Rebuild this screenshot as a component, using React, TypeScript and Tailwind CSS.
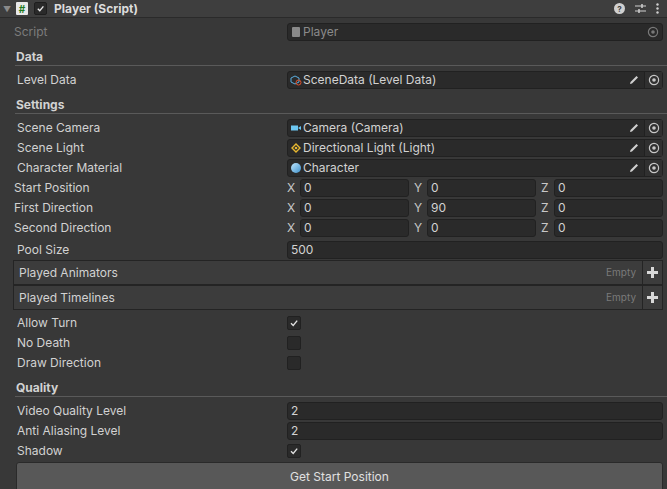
import React from "react";

const Pencil = () => (
  <svg width="12" height="12" viewBox="0 0 12 12"><path d="M2 10 L2.5 8 L8.5 2 L10 3.5 L4 9.5 Z" fill="#d0d0d0"/></svg>
);
const Target = () => (
  <svg width="12" height="12" viewBox="0 0 12 12"><circle cx="6" cy="6" r="4.6" fill="none" stroke="#c8c8c8" strokeWidth="1.2"/><circle cx="6" cy="6" r="1.8" fill="#c8c8c8"/></svg>
);

const Label = ({ children, pl = "pl-[17px]" }: { children: React.ReactNode; pl?: string }) => (
  <div className={`w-[287px] shrink-0 ${pl} text-[12px] text-[#d2d2d2] truncate`}>{children}</div>
);

const ObjField = ({ icon, text, disabled }: { icon: React.ReactNode; text: string; disabled?: boolean }) => (
  <div className="flex-1 h-[18px] mr-[4px] flex items-center rounded-[3px] border border-[#212121] bg-[#2a2a2a]">
    <div className="w-[14px] flex justify-center ml-[1px]">{icon}</div>
    <span className={`flex-1 text-[12px] ${disabled ? "text-[#8a8a8a]" : "text-[#d2d2d2]"}`}>{text}</span>
    {!disabled && <div className="w-[20px] flex justify-center"><Pencil /></div>}
    <div className={`w-[18px] h-full flex items-center justify-center ${disabled ? "opacity-50" : "bg-[#303030] border-l border-[#212121]"}`}><Target /></div>
  </div>
);

const TextField = ({ v }: { v: string }) => (
  <div className="flex-1 h-[18px] mr-[4px] flex items-center rounded-[3px] border border-[#212121] bg-[#2a2a2a] px-[3px] text-[12px] text-[#d2d2d2]">{v}</div>
);

const Row = ({ children }: { children: React.ReactNode }) => (
  <div className="h-[20px] flex items-center">{children}</div>
);

const Header = ({ t }: { t: string }) => (
  <div className="h-[28px] flex flex-col justify-end mx-[0px]">
    <div className="pl-[16px] text-[12px] font-bold text-[#d2d2d2] leading-[16px]">{t}</div>
    <div className="ml-[15px] h-px bg-[#5a5a5a] mb-[4px]" />
  </div>
);

const Vec = ({ label, x, y, z }: { label: string; x: string; y: string; z: string }) => (
  <Row>
    <Label pl="pl-[14px]">{label}</Label>
    <div className="flex-1 flex mr-[4px] gap-[5px]">
      {[["X", x], ["Y", y], ["Z", z]].map(([k, v]) => (
        <div key={k} className="flex-1 flex items-center">
          <span className="w-[13px] text-[12px] text-[#c8c8c8]">{k}</span>
          <div className="flex-1 h-[18px] flex items-center rounded-[3px] border border-[#212121] bg-[#2a2a2a] px-[3px] text-[12px] text-[#d2d2d2]">{v}</div>
        </div>
      ))}
    </div>
  </Row>
);

const Check = ({ on }: { on: boolean }) => (
  <div className="w-[14px] h-[14px] rounded-[2px] border border-[#212121] bg-[#2a2a2a] flex items-center justify-center">
    {on && <svg width="10" height="10" viewBox="0 0 10 10"><path d="M2 5.2 L4.2 7.4 L8.2 2.6" fill="none" stroke="#e0e0e0" strokeWidth="1.4"/></svg>}
  </div>
);

const ListBar = ({ t }: { t: string }) => (
  <div className="h-[25px] ml-[13px] mr-[4px] flex items-center border border-[#242424] bg-[#3c3c3c]">
    <span className="flex-1 pl-[5px] text-[12px] text-[#d2d2d2]">{t}</span>
    <span className="text-[10px] text-[#7a7a7a] mr-[6px]">Empty</span>
    <div className="w-[20px] h-full flex items-center justify-center border-l border-[#242424]">
      <svg width="11" height="11" viewBox="0 0 11 11"><path d="M4 0h3v4h4v3H7v4H4V7H0V4h4z" fill="#d8d8d8"/></svg>
    </div>
  </div>
);

export default function App() {
  return (
    <div className="w-[667px] h-[489px] overflow-hidden bg-[#383838] select-none" style={{ fontFamily: "Inter, 'Noto Sans', sans-serif" }}>
      <div className="h-[18px] flex items-center bg-[#3e3e3e] border-b border-[#2a2a2a]">
        <span className="ml-[3px] text-[8px] text-[#8a8a8a]">▼</span>
        <div className="ml-[5px] w-[12px] h-[13px] bg-[#e8e8e8] rounded-[1px] flex items-center justify-center text-[10px] font-bold text-[#1f7a1f] leading-none">#</div>
        <div className="ml-[6px] w-[13px] h-[13px] rounded-[2px] bg-[#2a2a2a] border border-[#1e1e1e] flex items-center justify-center">
          <svg width="9" height="9" viewBox="0 0 10 10"><path d="M2 5.2 L4.2 7.4 L8.2 2.6" fill="none" stroke="#e8e8e8" strokeWidth="1.5"/></svg>
        </div>
        <span className="ml-[7px] text-[12px] font-bold text-[#dcdcdc]">Player (Script)</span>
        <div className="flex-1" />
        <div className="w-[11px] h-[11px] rounded-full bg-[#d0d0d0] flex items-center justify-center text-[8px] font-bold text-[#3e3e3e]">?</div>
        <svg className="ml-[10px]" width="11" height="11" viewBox="0 0 11 11"><path d="M0 3h11M0 8h11" stroke="#d0d0d0" strokeWidth="1.2"/><path d="M7 1v4M4 6v4" stroke="#d0d0d0" strokeWidth="1.5"/></svg>
        <svg className="ml-[10px] mr-[8px]" width="3" height="11" viewBox="0 0 3 11"><circle cx="1.5" cy="1.5" r="1.2" fill="#d0d0d0"/><circle cx="1.5" cy="5.5" r="1.2" fill="#d0d0d0"/><circle cx="1.5" cy="9.5" r="1.2" fill="#d0d0d0"/></svg>
      </div>
      <div className="h-[4px]" />
      <Row>
        <div className="w-[287px] shrink-0 pl-[14px] text-[12px] text-[#7c7c7c]">Script</div>
        <ObjField disabled text="Player" icon={<div className="w-[8px] h-[10px] bg-[#8a8a8a] rounded-[1px]" />} />
      </Row>
      <Header t="Data" />
      <Row>
        <Label>Level Data</Label>
        <ObjField text="SceneData (Level Data)" icon={<svg width="12" height="12" viewBox="0 0 12 12"><path d="M1 4 L5 2 L9 4 V8 L5 10 L1 8Z" fill="none" stroke="#5aaee0" strokeWidth="1"/><circle cx="8.5" cy="8.5" r="2.5" fill="none" stroke="#e0502a" strokeWidth="1"/></svg>} />
      </Row>
      <div className="h-[0px]" />
      <Header t="Settings" />
      <Row>
        <Label>Scene Camera</Label>
        <ObjField text="Camera (Camera)" icon={<svg width="12" height="12" viewBox="0 0 12 12"><rect x="1" y="3.5" width="7" height="5" fill="#6cc6f0"/><path d="M8 6 L11 4 V8Z" fill="#6cc6f0"/></svg>} />
      </Row>
      <Row>
        <Label>Scene Light</Label>
        <ObjField text="Directional Light (Light)" icon={<svg width="12" height="12" viewBox="0 0 12 12"><path d="M6 2 L10 6 L6 10 L2 6Z" fill="none" stroke="#e8b830" strokeWidth="1.4"/><circle cx="6" cy="6" r="1.3" fill="#e8b830"/></svg>} />
      </Row>
      <Row>
        <Label>Character Material</Label>
        <ObjField text="Character" icon={<div className="w-[10px] h-[10px] rounded-full bg-gradient-to-br from-[#bfe8ff] to-[#3a90c8]" />} />
      </Row>
      <Vec label="Start Position" x="0" y="0" z="0" />
      <Vec label="First Direction" x="0" y="90" z="0" />
      <Vec label="Second Direction" x="0" y="0" z="0" />
      <div className="h-[2px]" />
      <Row>
        <Label>Pool Size</Label>
        <TextField v="500" />
      </Row>
      <ListBar t="Played Animators" />
      <ListBar t="Played Timelines" />
      <div className="h-[3px]" />
      <Row><Label>Allow Turn</Label><Check on /></Row>
      <Row><Label>No Death</Label><Check on={false} /></Row>
      <Row><Label>Draw Direction</Label><Check on={false} /></Row>
      <Header t="Quality" />
      <Row><Label>Video Quality Level</Label><TextField v="2" /></Row>
      <Row><Label>Anti Aliasing Level</Label><TextField v="2" /></Row>
      <Row><Label>Shadow</Label><Check on /></Row>
      <div className="mt-[1px] ml-[16px] mr-[4px] h-[30px] rounded-[3px] border border-[#2a2a2a] bg-[#585858] flex items-center justify-center text-[12px] text-[#e0e0e0]">Get Start Position</div>
    </div>
  );
}
